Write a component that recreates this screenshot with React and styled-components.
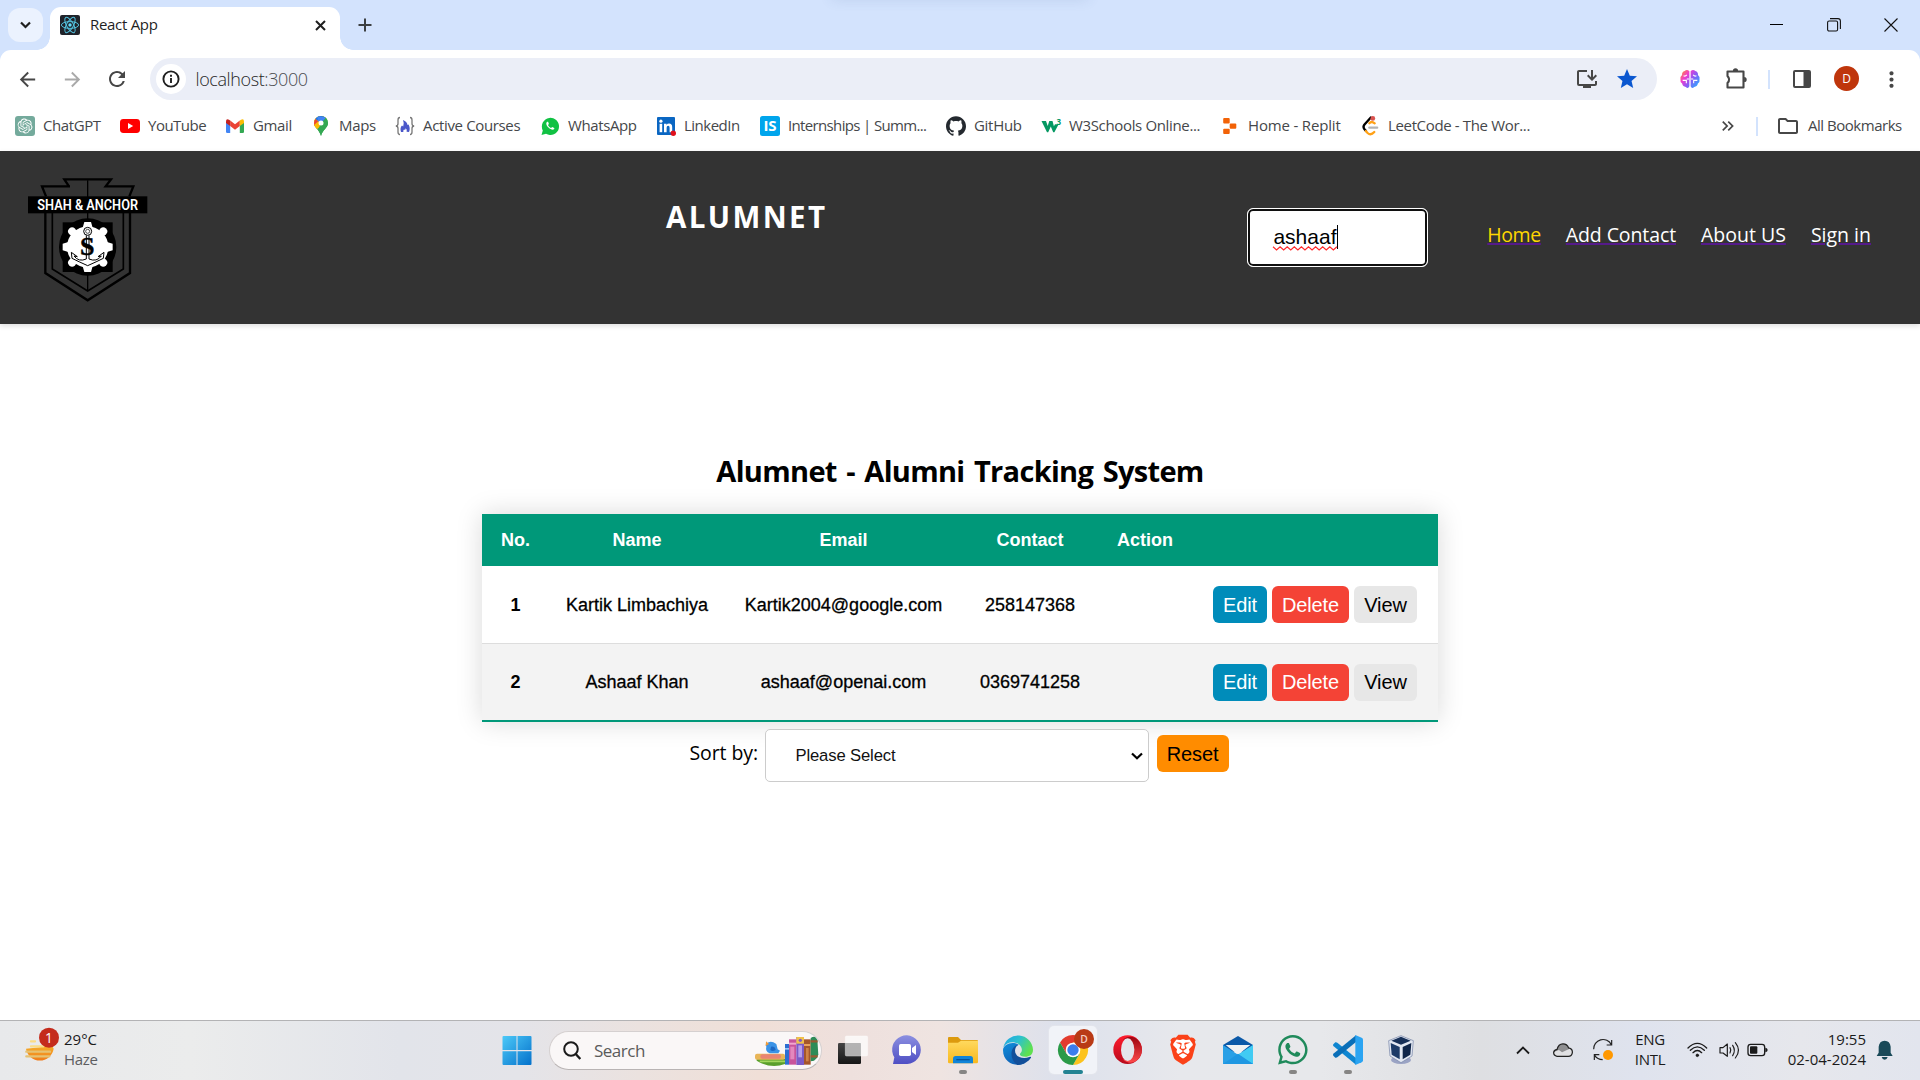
import React from "react";
import styled, { createGlobalStyle } from "styled-components";
import {
  MdArrowBack,
  MdArrowForward,
  MdRefresh,
  MdOutlineInstallDesktop,
  MdStar,
  MdMoreVert,
  MdKeyboardDoubleArrowRight,
  MdOutlineFolder,
} from "react-icons/md";
import { SiOpenai, SiBrave, SiGithub } from "react-icons/si";
import { FaWhatsapp } from "react-icons/fa";

const ui = `"Open Sans", "Noto Sans", sans-serif`;
const arial = `"Liberation Sans", Arial, sans-serif`;

const GlobalStyle = createGlobalStyle`
  *, *::before, *::after { box-sizing: border-box; }
  body { margin: 0; background: #fff; font-family: ${ui}; overflow: hidden; }
  svg { display: block; flex: none; overflow: visible; }
`;

const Screen = styled.div`
  width: 1920px;
  height: 1080px;
  display: flex;
  flex-direction: column;
  overflow: hidden;
`;

/* ---------- browser frame ---------- */

const TabStrip = styled.div`
  position: relative;
  display: flex;
  height: 50px;
  flex: none;
  padding: 7px 1px 0 8px;
  background: #d3e3fd;
  overflow: hidden;
  &::after {
    content: "";
    position: absolute;
    top: -10px;
    left: 832px;
    width: 256px;
    height: 8px;
    box-shadow: 0 0 14px rgba(60, 90, 140, 0.2);
  }
`;

const TabSearch = styled.div`
  width: 35px;
  height: 34px;
  margin: 1px 7px 0 0;
  border-radius: 12px;
  background: #ebf2fe;
  display: flex;
  align-items: center;
  justify-content: center;
`;

const Tab = styled.div`
  position: relative;
  width: 290px;
  height: 43px;
  padding: 0 10px 7px 10px;
  display: flex;
  align-items: center;
  background: #fff;
  border-radius: 11px 11px 0 0;
  &::before,
  &::after {
    content: "";
    position: absolute;
    bottom: 0;
    width: 13px;
    height: 13px;
  }
  &::before {
    left: -13px;
    background: radial-gradient(circle at 0 0, transparent 12.5px, #fff 13px);
  }
  &::after {
    right: -13px;
    background: radial-gradient(circle at 100% 0, transparent 12.5px, #fff 13px);
  }
`;

const TabTitle = styled.span`
  margin: 0 0 2px 10px;
  flex: 1;
  font-size: 15px;
  letter-spacing: -0.3px;
  line-height: 20px;
  color: #1f1f1f;
`;

const NewTab = styled.div`
  width: 30px;
  height: 36px;
  margin-left: 10px;
  display: flex;
  align-items: center;
  justify-content: center;
`;

const WindowButtons = styled.div`
  margin-left: auto;
  display: flex;
  height: 35px;
`;

const WindowButton = styled.div`
  width: 57px;
  display: flex;
  align-items: center;
  justify-content: center;
`;

const ToolbarBack = styled.div`
  background: #d3e3fd;
  flex: none;
`;

const Toolbar = styled.div`
  display: flex;
  align-items: center;
  height: 50px;
  padding: 8px 0 0 4.5px;
  background: #fff;
  border-radius: 11px 11px 0 0;
`;

const Slot = styled.div`
  width: ${(p) => p.$w || 45}px;
  flex: none;
  display: flex;
  align-items: center;
  justify-content: center;
  color: ${(p) => p.$c || "#474747"};
`;

const Omnibox = styled.div`
  width: 1507px;
  height: 42px;
  margin: 0 10px 0 10.5px;
  padding: 0 10px 0 6px;
  border-radius: 21px;
  background: #ebeef7;
  display: flex;
  align-items: center;
`;

const SiteInfo = styled.div`
  width: 30px;
  height: 30px;
  border-radius: 50%;
  background: #fff;
  display: flex;
  align-items: center;
  justify-content: center;
`;

const Address = styled.span`
  flex: 1;
  margin-left: 9.5px;
  font-size: 18px;
  line-height: 24px;
  letter-spacing: -0.4px;
  font-weight: 300;
  color: #1f1f1f;
  span { color: #4a4c50; }
`;

const Divider = styled.div`
  width: 2px;
  height: 19px;
  margin: 0 ${(p) => p.$m}px;
  background: #d3e3fd;
`;

const Avatar = styled.div`
  width: 25px;
  height: 25px;
  margin-bottom: 2px;
  border-radius: 50%;
  background: #bf360c;
  color: #fff;
  font-size: 12px;
  line-height: 25px;
  text-align: center;
`;

const BookmarksBar = styled.div`
  display: flex;
  align-items: center;
  height: 51px;
  flex: none;
  padding: 1px 16px 0 15px;
  background: #fff;
`;

const Bookmark = styled.div`
  width: ${(p) => p.$w}px;
  flex: none;
  display: flex;
  align-items: center;
  gap: 8px;
`;

const BookmarkIcon = styled.div`
  width: 20px;
  height: 20px;
  flex: none;
`;

const BookmarkName = styled.span`
  margin-bottom: 2px;
  white-space: nowrap;
  font-size: 15px;
  line-height: 20px;
  letter-spacing: ${(p) => p.$ls}px;
  color: #45474a;
`;

const BookmarksEnd = styled.div`
  margin-left: auto;
  display: flex;
  align-items: center;
  color: #474747;
`;

/* ---------- page ---------- */

const Header = styled.header`
  position: relative;
  display: flex;
  align-items: flex-start;
  height: 173px;
  flex: none;
  padding: 0 49px 0 28px;
  background: #333;
  box-shadow: 0 2px 5px rgba(0, 0, 0, 0.13);
`;

const Crest = styled.div`
  width: 120px;
  margin-top: 26px;
`;

const Brand = styled.h1`
  margin: 46px 0 0 518px;
  width: 582px;
  font-size: 29.5px;
  line-height: 40px;
  font-weight: 700;
  letter-spacing: 2.4px;
  color: #fff;
`;

const SearchField = styled.div`
  position: relative;
  width: 181px;
  height: 59px;
  margin-top: 57px;
  padding: 0 0 2px 25px;
  display: flex;
  align-items: center;
  border: 1px solid #fff;
  border-radius: 6px;
  background: #fff;
  box-shadow: inset 0 0 0 2px #101010;
  font: 21px/24px ${arial};
  color: #000;
`;

const Caret = styled.span`
  width: 1px;
  height: 24px;
  background: #000;
`;

const Squiggle = styled.svg`
  position: absolute;
  left: 25px;
  top: 37px;
`;

const Nav = styled.nav`
  margin: 69px 0 0 59px;
  display: flex;
  gap: 25px;
`;

const NavLink = styled.a`
  font-size: 19.5px;
  line-height: 30px;
  white-space: nowrap;
  letter-spacing: ${(p) => p.$ls || 0}px;
  color: ${(p) => (p.$active ? "#ffd700" : "#fff")};
  text-decoration: underline #551a8b 2px;
  text-underline-offset: 1px;
`;

const Main = styled.main`
  flex: 1;
  display: flex;
  flex-direction: column;
  align-items: center;
  padding-top: 127px;
`;

const Title = styled.h2`
  margin: 0 0 23px;
  font-size: 29px;
  line-height: 40px;
  font-weight: 700;
  letter-spacing: -0.68px;
  word-spacing: 2.6px;
  color: #000;
`;

const Table = styled.table`
  width: 956px;
  table-layout: fixed;
  border-collapse: separate;
  border-spacing: 0;
  font: 18px/22px ${arial};
  text-align: center;
  background: #fff;
  box-shadow: 0 0 25px rgba(0, 0, 0, 0.15);
`;

const HeadCell = styled.th`
  height: 52px;
  padding: 0;
  background: #009879;
  color: #fff;
  font-weight: 700;
`;

const Cell = styled.td`
  height: 78px;
  padding: 0;
  color: #000;
  font-weight: ${(p) => (p.$strong ? 700 : 400)};
  -webkit-text-stroke: ${(p) => (p.$strong ? 0 : 0.3)}px #000;
  background: ${(p) => (p.$last ? "#f3f3f3" : "#fff")};
  border-bottom: ${(p) => (p.$last ? "2px solid #009879" : "1px solid #ddd")};
`;

const Actions = styled.div`
  display: flex;
  justify-content: flex-end;
  gap: 5px;
  padding-right: 21px;
`;

const kinds = {
  edit: ["#008cba", "#fff"],
  delete: ["#f44336", "#fff"],
  view: ["#e7e7e7", "#000"],
  reset: ["#ff8c00", "#000"],
};

const Button = styled.button`
  width: ${(p) => p.$w}px;
  height: 37px;
  padding: 0;
  border: 0;
  border-radius: 6px;
  font: 20px/24px ${arial};
  letter-spacing: -0.1px;
  -webkit-text-stroke: 0;
  background: ${(p) => kinds[p.$kind][0]};
  color: ${(p) => kinds[p.$kind][1]};
`;

const SortRow = styled.div`
  display: flex;
  align-items: flex-start;
  margin: 7px 2px 0 0;
`;

const SortLabel = styled.label`
  width: 69px;
  margin: 9px 6px 0 0;
  font-size: 19.5px;
  line-height: 30px;
  letter-spacing: -0.1px;
  white-space: nowrap;
`;

const SelectBox = styled.div`
  width: 384px;
  height: 53px;
  margin-right: 8px;
  padding: 0 5px 0 30px;
  display: flex;
  align-items: center;
  justify-content: space-between;
  border: 1px solid #ccc;
  border-radius: 5px;
  background: #fff;
  font: 16.67px/20px ${arial};
  letter-spacing: -0.15px;
  color: #111;
`;

const ResetWrap = styled.div`
  margin-top: 6px;
`;

/* ---------- taskbar ---------- */

const Taskbar = styled.footer`
  display: flex;
  align-items: flex-start;
  height: 60px;
  flex: none;
  padding: 5px 17px 0 25px;
  border-top: 1px solid #b3b3b5;
  background: linear-gradient(
    90deg,
    #e8e9eb 0,
    #ebecec 190px,
    #e2e4ea 400px,
    #e4e4e9 520px,
    #ebe2df 640px,
    #f0dfd7 760px,
    #eee0dd 850px,
    #efe4e1 940px,
    #dde1ec 1060px,
    #e7e8ec 1180px,
    #e7e8eb 1320px,
    #dedfe2 1480px,
    #dfe3ee 1640px,
    #e6e7ec 1800px,
    #e2e5ee 1920px
  );
`;

const Weather = styled.div`
  display: flex;
  width: 467.5px;
  gap: 4px;
`;

const Lines = styled.div`
  width: ${(p) => p.$w || "auto"};
  margin-top: 3px;
  display: flex;
  flex-direction: column;
  text-align: ${(p) => p.$align || "left"};
  font-size: 15px;
  line-height: 20px;
  letter-spacing: ${(p) => p.$ls || 0}px;
  white-space: nowrap;
  color: #1b1b1b;
`;

const Muted = styled.span`
  color: #5c5d5f;
  letter-spacing: -0.3px;
`;

const SearchPill = styled.div`
  width: 273px;
  height: 39px;
  margin: 5px 7px 0 8.5px;
  padding: 0 2px 0 13px;
  display: flex;
  align-items: center;
  border: 1px solid #d5d0d0;
  border-bottom-color: #b9b4b4;
  border-radius: 20px;
  background: #faf7f7;
  overflow: hidden;
`;

const SearchText = styled.span`
  flex: 1;
  margin-left: 13px;
  font-size: 17px;
  line-height: 24px;
  letter-spacing: -0.5px;
  color: #5b5b5b;
`;

const Apps = styled.div`
  display: flex;
  gap: 7px;
`;

const App48 = styled.div`
  width: 48px;
  height: 48px;
  display: flex;
  flex-direction: column;
  align-items: center;
  border-radius: 5px;
  background: ${(p) => (p.$active ? "#f1f3f8" : "transparent")};
  box-shadow: ${(p) => (p.$active ? "0 0 0 1px #e3e5ec" : "none")};
`;

const Indicator = styled.div`
  width: ${(p) => (p.$active ? 20 : 8)}px;
  height: 4px;
  border-radius: 2px;
  background: ${(p) => (p.$active ? "#238393" : "#868584")};
`;

const Tray = styled.div`
  margin-left: auto;
  display: flex;
`;

const TrayIcon = styled.div`
  width: ${(p) => p.$w}px;
  height: 48px;
  display: flex;
  align-items: center;
  justify-content: center;
`;

/* ---------- drawings ---------- */

const ReactIcon = () => (
  <svg width="20" height="20" viewBox="0 0 20 20">
    <rect width="20" height="20" rx="2" fill="#20232a" />
    <g fill="none" stroke="#53c1de" strokeWidth="1">
      {[0, 60, 120].map((a) => (
        <ellipse key={a} cx="10" cy="10" rx="8.6" ry="3.4" transform={`rotate(${a} 10 10)`} />
      ))}
    </g>
    <circle cx="10" cy="10" r="1.7" fill="#61dafb" />
  </svg>
);

const Stroke = ({ d, w = 20, h = 20, s = 2, c = "#1f1f1f" }) => (
  <svg width={w} height={h} viewBox={`0 0 ${w} ${h}`} fill="none" stroke={c} strokeWidth={s}>
    <path d={d} />
  </svg>
);

const CrestLogo = () => (
  <svg width="120" height="128" viewBox="84 80 360 384">
    <g fill="none" stroke="#000" strokeWidth="7">
      <path d="M210 108H126L138 138M207 108L193 87H333L317 108H400L388 138" />
      <path d="M136 186V368L263 450L390 368V186" />
      <path d="M157 186V356L263 422L370 356V186" strokeWidth="5" />
      <path d="M263 90V422" strokeWidth="4" />
    </g>
    <rect x="84" y="138" width="358" height="51" fill="#000" />
    <text x="263" y="179" textAnchor="middle" fill="#fff" fontFamily="Roboto, sans-serif" fontWeight="600" fontSize="43" textLength="302" lengthAdjust="spacingAndGlyphs">
      SHAH &amp; ANCHOR
    </text>
    <circle cx="263" cy="290" r="86" fill="#000" />
    <rect x="188" y="216" width="150" height="149" fill="#000" />
    <g fill="#fff">
      <circle cx="263" cy="290" r="62" />
      {[0, 90, 180, 270].map((a) => (
        <path key={a} d="M248 232L253 215H273L278 232Z" transform={`rotate(${a} 263 290)`} />
      ))}
      {[45, 135, 225, 315].map((a) => (
        <circle key={a} cx="263" cy="224" r="12" transform={`rotate(${a} 263 290)`} />
      ))}
    </g>
    <g fill="none" stroke="#000" strokeWidth="3">
      <circle cx="263" cy="243" r="12" />
      <circle cx="263" cy="243" r="6" strokeWidth="2" />
      <path d="M259 255V326M267 255V326M259 326Q236 336 222 317L232 319L214 306L216 324Q236 334 263 346Q290 334 310 324L312 306L294 319L304 317Q290 336 267 326" />
    </g>
    <text x="262" y="315" textAnchor="middle" fontFamily='"Liberation Serif", serif' fontWeight="700" fontSize="78" stroke="#000" strokeWidth="1.5" fill="#000">
      S
    </text>
  </svg>
);

const ico = { width: 20, height: 20, viewBox: "0 0 20 20" };

const ChatGptIcon = () => (
  <svg {...ico}>
    <rect width="20" height="20" rx="3" fill="#74aa9c" />
    <SiOpenai x="2.5" y="2.5" size={15} color="#fff" />
  </svg>
);
const YouTubeIcon = () => (
  <svg {...ico}>
    <rect y="3" width="20" height="14" rx="3.4" fill="#f00" />
    <path d="M8 7L13.2 10L8 13Z" fill="#fff" />
  </svg>
);
const GmailIcon = () => (
  <svg {...ico}>
    <path d="M1 6V15.7Q1 17 2.3 17H5.2V9Z" fill="#4285f4" />
    <path d="M14.8 9V17H17.7Q19 17 19 15.7V6Z" fill="#34a853" />
    <path d="M5.2 4.6L10 8.3L14.8 4.6V10L10 13.7L5.2 10Z" fill="#ea4335" />
    <path d="M14.8 4.6L16 3.7Q19 2.4 19 5.5V7L14.8 10Z" fill="#fbbc04" />
    <path d="M5.2 4.6L4 3.7Q1 2.4 1 5.5V7L5.2 10Z" fill="#c5221f" />
  </svg>
);
const MapsIcon = () => (
  <svg {...ico}>
    <clipPath id="pin">
      <path d="M10 0A7 7 0 0 1 17 7C17 12 11.6 13.5 10 20C8.4 13.5 3 12 3 7A7 7 0 0 1 10 0Z" />
    </clipPath>
    <g clipPath="url(#pin)">
      <rect width="20" height="20" fill="#34a853" />
      <path d="M0 14L10 7L3 0H0Z" fill="#fbbc04" />
      <path d="M4.5 13L14 2L20 7V0H0V14Z" fill="#fbbc04" />
      <path d="M0 0L10 7L17 -1Z" fill="#1a73e8" />
      <path d="M3 2L10 7.5L6 12L0 6Z" fill="#ea4335" />
      <path d="M3 9L7.5 5L10 10L5 14Z" fill="#fbbc04" />
      <path d="M10 7L15 1L20 4V20H9L7 14Z" fill="#34a853" />
      <path d="M6 0L15 1.5L10 7.2L7 5Z" fill="#4285f4" />
    </g>
    <circle cx="10" cy="7" r="2.5" fill="#fff" />
  </svg>
);
const CoursesIcon = () => (
  <svg {...ico} fill="none">
    <path d="M5 1.5Q3 1.5 3 4V7.5Q3 10 .8 10Q3 10 3 12.5V16Q3 18.5 5 18.5M15 1.5Q17 1.5 17 4V7.5Q17 10 19.2 10Q17 10 17 12.5V16Q17 18.5 15 18.5" stroke="#777" strokeWidth="1.3" />
    <path d="M6 16Q4.6 12 7 9.5L8.2 10.5Q9.5 7.5 8 4Q12 5.5 12.6 9L13.6 8.6Q15.6 12.5 14 16L11.6 15.8Q12.4 13.6 10.6 12.2Q10.6 14.6 9 13.4Q7.8 14.6 8.4 16Z" fill="#4a57c9" />
  </svg>
);
const WhatsAppBookmark = () => (
  <svg {...ico}>
    <path d="M1.5 19L2.8 14.4A8.6 8.6 0 1 1 6 17.8Z" fill="#10c143" />
    <path d="M7.3 5.7C5.5 6.6 6.3 9.4 8.5 11.6C10.7 13.7 13.3 14.5 14.3 12.8L14.3 11.9L12.1 10.9L11.1 12C9.6 11.4 8.6 10.4 8 9L8.9 7.9L8.1 5.8Z" fill="#fff" />
  </svg>
);
const LinkedInIcon = () => (
  <svg {...ico}>
    <rect x="1" y="1" width="18" height="18" rx="1" fill="#0a66c2" />
    <rect x="3.6" y="7.8" width="2.6" height="8.4" fill="#fff" />
    <circle cx="4.9" cy="5.2" r="1.6" fill="#fff" />
    <path d="M8 7.8H10.5V9Q11.3 7.6 13.1 7.6Q16.2 7.6 16.2 11.2V16.2H13.6V11.8Q13.6 9.8 12.2 9.8Q10.6 9.8 10.6 11.8V16.2H8Z" fill="#fff" />
    <circle cx="17.3" cy="17.3" r="2.7" fill="#e0101c" />
  </svg>
);
const InternIcon = () => (
  <svg {...ico}>
    <rect width="20" height="20" rx="2.5" fill="#00a5ec" />
    <text x="10" y="15.4" textAnchor="middle" fontFamily={ui} fontWeight="700" fontSize="15" fill="#fff">
      IS
    </text>
  </svg>
);
const W3Icon = () => (
  <svg {...ico}>
    <path d="M.5 5H5L6.7 10L8.3 5H11.5L12.9 10.2L14 8.2L17.5 8.5L13.4 16.3H12.2L9.8 10.5L7.2 16.3H6Z" fill="#059862" />
    <text x="15.4" y="8.6" fontFamily={ui} fontWeight="700" fontSize="8" fill="#059862">
      3
    </text>
  </svg>
);
const ReplitIcon = () => (
  <svg {...ico} fill="#f26207">
    <rect x="3.2" y="2" width="6.5" height="5.4" rx="1" />
    <rect x="9.7" y="7.4" width="6.6" height="5.4" rx="1" />
    <rect x="3.2" y="12.8" width="6.5" height="5.2" rx="1" />
  </svg>
);
const LeetIcon = () => (
  <svg {...ico} fill="none" strokeWidth="2.3" strokeLinecap="round">
    <path d="M10.8 1.5L4.3 8.8Q2.7 11 4.3 13L6 15" stroke="#000" />
    <path d="M9.3 7.2Q11.5 4.6 14.7 7.3M5.8 15L7.6 17Q10.8 19.8 14.3 16" stroke="#ffa116" />
    <path d="M9.3 11.7H17.2" stroke="#b3b3b3" />
    <circle cx="12.8" cy="2.4" r="2.4" fill="#d9534f" />
  </svg>
);

const bookmarks = [
  ["ChatGPT", 105, -0.4, <ChatGptIcon />],
  ["YouTube", 105, -0.5, <YouTubeIcon />],
  ["Gmail", 86, -0.35, <GmailIcon />],
  ["Maps", 84, -0.35, <MapsIcon />],
  ["Active Courses", 145, -0.35, <CoursesIcon />],
  ["WhatsApp", 116, -0.4, <WhatsAppBookmark />],
  ["LinkedIn", 104, -0.5, <LinkedInIcon />],
  ["Internships | Summ...", 186, -0.65, <InternIcon />],
  ["GitHub", 95, -0.3, <SiGithub size={20} color="#24292f" />],
  ["W3Schools Online...", 179, -0.35, <W3Icon />],
  ["Home - Replit", 140, -0.17, <ReplitIcon />],
  ["LeetCode - The Wor...", 190, -0.35, <LeetIcon />],
];

const WeatherIcon = () => (
  <svg width="35" height="40" viewBox="75 48 105 120">
    <defs>
      <linearGradient id="sun" x1="0" y1="0" x2="0" y2="1">
        <stop offset="0" stopColor="#f6b32b" />
        <stop offset="1" stopColor="#f07c1b" />
      </linearGradient>
    </defs>
    <path d="M78 116A42 42 0 0 0 161 116L155 104L120 112Z" fill="url(#sun)" />
    <g stroke="#fbdc84" strokeWidth="7" strokeLinecap="round">
      <path d="M93 94H105M93 109H130" />
      <path d="M79 125H150M79 139H148" stroke="#e6c273" />
    </g>
    <circle cx="147" cy="83" r="30" fill="#c42b1c" />
    <text x="147" y="98" textAnchor="middle" fontFamily={ui} fontSize="41" fill="#fff">
      1
    </text>
  </svg>
);

const WindowsIcon = () => (
  <svg width="48" height="44" viewBox="7.5 48 144 132">
    <defs>
      <linearGradient id="win" x1="0" y1="0" x2="1" y2="1">
        <stop offset="0" stopColor="#4cc9f8" />
        <stop offset="1" stopColor="#0471cb" />
      </linearGradient>
    </defs>
    <path d="M36 81Q36 78 39 78H78V120H36ZM81 78H120Q123 78 123 81V120H81ZM36 124H78V165H39Q36 165 36 162ZM81 124H123V162Q123 165 120 165H81Z" fill="url(#win)" />
  </svg>
);

const Books = () => (
  <svg width="64" height="30" viewBox="798 84 192 90">
    <path d="M803 158Q845 184 888 168V152H803Z" fill="#5a9e2c" />
    <path d="M812 160H888" stroke="#a3d65c" strokeWidth="5" />
    <rect x="798" y="137" width="90" height="18" rx="6" fill="#e9b558" />
    <rect x="814" y="139" width="62" height="13" rx="6" fill="#e88573" />
    <path d="M830 110Q842 94 862 108L866 124L873 128L868 136H842Q828 130 832 116Z" fill="#3b93e6" />
    <path d="M831 100L840 108L830 114Z" fill="#f19b38" />
    <path d="M846 116Q858 114 860 126Q850 132 844 126Z" fill="#1d68c4" />
    <rect x="888" y="108" width="12" height="62" fill="#2c6fd1" />
    <rect x="888" y="120" width="12" height="5" fill="#9cc7f5" />
    <rect x="900" y="94" width="22" height="76" fill="#c8549b" />
    <rect x="900" y="104" width="22" height="6" fill="#f1a6cf" />
    <rect x="904" y="116" width="12" height="38" fill="#e388bd" />
    <rect x="922" y="87" width="23" height="84" fill="#7c5bc7" />
    <rect x="922" y="87" width="23" height="20" fill="#f0c04a" />
    <circle cx="934" cy="97" r="5" fill="#7c5bc7" />
    <rect x="928" y="112" width="11" height="36" fill="#b7a0ea" />
    <rect x="945" y="94" width="20" height="76" fill="#a5562b" />
    <rect x="945" y="108" width="20" height="6" fill="#e9a25e" />
    <rect x="951" y="120" width="8" height="40" fill="#cf8247" />
    <path d="M965 90Q980 80 985 96L988 140Q985 152 975 158L965 160Z" fill="#2e8b57" />
    <path d="M965 100H986M965 145H986" stroke="#9a5a32" strokeWidth="7" />
  </svg>
);

const AppSvg = ({ x, children }) => (
  <svg width="48" height="44" viewBox={`${x} 48 144 132`}>
    {children}
  </svg>
);

const TaskView = () => (
  <AppSvg x={1017}>
    <defs>
      <linearGradient id="tv" x1="0" y1="0" x2="0" y2="1">
        <stop offset="0" stopColor="#444" />
        <stop offset="1" stopColor="#161616" />
      </linearGradient>
    </defs>
    <rect x="1044" y="99" width="69" height="63" rx="4" fill="url(#tv)" />
    <rect x="1066" y="78" width="67" height="60" rx="4" fill="#fff" fillOpacity=".72" stroke="#fff" strokeOpacity=".6" strokeWidth="2" />
    <rect x="1066" y="99" width="46" height="39" fill="#a3a1a0" fillOpacity=".55" />
  </AppSvg>
);
const Chat = () => (
  <AppSvg x={1182}>
    <defs>
      <linearGradient id="chat" x1="0" y1="0" x2="0" y2="1">
        <stop offset="0" stopColor="#8b8fe0" />
        <stop offset="1" stopColor="#4f4fc4" />
      </linearGradient>
    </defs>
    <path d="M1209 162L1213 142A43 43 0 1 1 1252 162Z" fill="url(#chat)" />
    <rect x="1227" y="102" width="36" height="36" rx="5" fill="#fff" />
    <path d="M1266 114L1278 105V135L1266 126Z" fill="#fff" />
  </AppSvg>
);
const Explorer = () => (
  <AppSvg x={1347}>
    <defs>
      <linearGradient id="fold" x1="0" y1="0" x2="0" y2="1">
        <stop offset="0" stopColor="#ffd95e" />
        <stop offset="1" stopColor="#f8b81e" />
      </linearGradient>
    </defs>
    <path d="M1374 84Q1374 81 1377 81H1404L1413 90H1461Q1464 90 1464 94V110H1374Z" fill="#dc9a0e" />
    <path d="M1374 98H1404L1413 92H1464V156Q1464 160 1460 160H1378Q1374 160 1374 156Z" fill="url(#fold)" />
    <path d="M1389 160V146Q1389 138 1397 138H1441Q1449 138 1449 146V160Z" fill="#1184d8" />
    <path d="M1399 149H1439" stroke="#06549c" strokeWidth="4" />
  </AppSvg>
);
const Edge = () => (
  <AppSvg x={102}>
    <defs>
      <linearGradient id="edge1" x1="0" y1="0" x2="1" y2=".5">
        <stop offset="0" stopColor="#1fa3e4" />
        <stop offset=".5" stopColor="#2cc1cf" />
        <stop offset="1" stopColor="#5fe04f" />
      </linearGradient>
      <linearGradient id="edge2" x1="0" y1="0" x2=".5" y2="1">
        <stop offset="0" stopColor="#0f8fdc" />
        <stop offset="1" stopColor="#0f5fb4" />
      </linearGradient>
    </defs>
    <path d="M130 112A45 45 0 0 1 219 119C219 134 208 140 196 140C184 140 178 136 180 131C186 126 188 117 182 109C170 92 142 92 130 112Z" fill="url(#edge1)" />
    <path d="M129 120C130 102 158 92 176 104C162 108 154 124 158 140C164 154 182 160 196 158C178 172 129 165 129 120Z" fill="url(#edge2)" />
    <path d="M176 104C150 108 146 146 172 165C190 164 206 154 213 143C214 139 210 140 208 141C186 150 160 138 166 116C168 110 171 107 176 104Z" fill="#124f9a" />
  </AppSvg>
);
const Chrome = () => (
  <AppSvg x={267}>
    <g transform="translate(339 120)">
      <path d="M-39-22.5A45 45 0 0 1 39-22.5L0-22.5L-19.5 11.25Z" fill="#e33b2e" />
      <path d="M39-22.5A45 45 0 0 1 0 45L19.5 11.25L0-22.5Z" fill="#fcc31e" />
      <path d="M0 45A45 45 0 0 1-39-22.5L-19.5 11.25L19.5 11.25Z" fill="#2a9a48" />
      <circle r="22" fill="#fff" />
      <circle r="17" fill="#3b7ded" />
    </g>
    <circle cx="372" cy="87" r="30" fill="#b93a16" />
    <text x="372" y="98" textAnchor="middle" fontFamily={ui} fontWeight="600" fontSize="31" fill="#f5cfc2">
      D
    </text>
  </AppSvg>
);
const Opera = () => (
  <AppSvg x={432}>
    <defs>
      <linearGradient id="op" x1="0" y1="0" x2="0" y2="1">
        <stop offset="0" stopColor="#ff1b2d" />
        <stop offset="1" stopColor="#b70a1c" />
      </linearGradient>
      <linearGradient id="op2" x1="0" y1="0" x2="0" y2="1">
        <stop offset="0" stopColor="#9c0411" />
        <stop offset="1" stopColor="#ff4b4b" />
      </linearGradient>
    </defs>
    <circle cx="503" cy="119" r="43" fill="url(#op)" />
    <path d="M488 90C505 74 524 82 531 87A43 43 0 0 1 531 151C520 160 502 162 488 148C532 158 534 78 488 90Z" fill="url(#op2)" />
    <ellipse cx="503" cy="119" rx="20" ry="34" fill="#e4e5ec" />
  </AppSvg>
);
const Brave = () => (
  <AppSvg x={597}>
    <path d="M642 88H696L700 104L686 146L669 156L652 146L638 104Z" fill="#fff" />
    <SiBrave x={624} y={74} size={90} color="#fb4219" />
  </AppSvg>
);
const Mail = () => (
  <AppSvg x={762}>
    <path d="M789 105L834 78L879 105V125H789Z" fill="#0b59a8" />
    <path d="M797 105H871L834 134Z" fill="#f1f2f3" />
    <path d="M789 105L834 134L879 105V162H789Z" fill="#2aa0e6" />
    <path d="M834 134L879 105V162Z" fill="#41cbf3" />
    <path d="M834 131L879 162H789Z" fill="#1f97e2" />
  </AppSvg>
);
const WhatsApp = () => (
  <AppSvg x={927}>
    <FaWhatsapp x={948} y={69} size={101} color="#1f8a5b" />
  </AppSvg>
);
const VsCode = () => (
  <AppSvg x={1092}>
    <path d="M1120 103L1126 97Q1129 96 1132 98L1188 144V164L1120 108Q1118 105 1120 103Z" fill="#0f86d1" />
    <path d="M1120 137L1126 143Q1129 144 1132 142L1188 96V76L1120 131Q1118 134 1120 137Z" fill="#0a6fb8" />
    <path d="M1186 75L1205 83Q1209 85 1209 89V151Q1209 155 1205 157L1186 165Z" fill="#2ba4f2" />
  </AppSvg>
);
const VBox = () => (
  <AppSvg x={1257}>
    <ellipse cx="1323" cy="150" rx="30" ry="12" fill="#9aa3c4" />
    <path d="M1323 77L1360 92L1356 138L1323 158L1290 138L1286 92Z" fill="#e3e8f2" stroke="#6f7fa3" strokeWidth="2" />
    <path d="M1323 80L1352 92L1323 104L1294 92Z" fill="#173058" />
    <path d="M1292 99L1319 111V148L1295 134Z" fill="#1d3b68" />
    <path d="M1354 99L1328 111V148L1351 134Z" fill="#10264a" />
  </AppSvg>
);

const apps = [
  [<TaskView />],
  [<Chat />],
  [<Explorer />, "open"],
  [<Edge />],
  [<Chrome />, "active"],
  [<Opera />],
  [<Brave />],
  [<Mail />],
  [<WhatsApp />, "open"],
  [<VsCode />, "open"],
  [<VBox />],
];

const Cloud = () => (
  <svg width="20" height="14.5" viewBox="1 2 64 45">
    <path d="M14 22Q18 4 33 4Q46 4 51 17Q64 20 63 32Q61 44 50 44H14Q3 42 3 32Q4 24 14 22Z" fill="#e0e0e2" />
    <path d="M4 30Q6 22 14 22Q18 4 33 4Q46 4 51 17L56 19L30 31L20 24Z" fill="#8f8f91" />
    <path d="M14 22Q18 4 33 4Q46 4 51 17Q64 20 63 32Q61 44 50 44H14Q3 42 3 32Q4 24 14 22Z" fill="none" stroke="#222" strokeWidth="4" />
  </svg>
);
const Sync = () => (
  <svg width="22" height="22" viewBox="456 87 66 66">
    <g fill="none" stroke="#222" strokeWidth="3.5">
      <path d="M461 118A28 28 0 0 1 514 104M515 90V105H500" />
      <path d="M463 150V134H478M464 136Q472 148 488 149" />
    </g>
    <circle cx="504" cy="135" r="15" fill="#ff9800" />
  </svg>
);
const Wifi = () => (
  <svg width="21" height="16" viewBox="743 94 63 48" fill="none" stroke="#1b1b1b" strokeWidth="4" strokeLinecap="round">
    <path d="M746 112Q774 84 802 112M753 119Q774 98 795 119M761 126Q774 113 787 126" />
    <circle cx="774" cy="134" r="4" fill="#1b1b1b" strokeWidth="2" />
  </svg>
);
const Volume = () => (
  <svg width="21" height="19" viewBox="833 92 63 57" fill="none" stroke="#1b1b1b" strokeWidth="3.5" strokeLinecap="round" strokeLinejoin="round">
    <path d="M836 112H845L858 101V138L845 128H836Z" />
    <path d="M866 112Q871 120 866 128M874 105Q884 120 874 136M882 97Q901 120 882 143" />
  </svg>
);
const Battery = () => (
  <svg width="21" height="14" viewBox="923 99 63 42">
    <rect x="926" y="103" width="50" height="34" rx="8" fill="none" stroke="#1b1b1b" strokeWidth="4" />
    <rect x="932" y="109" width="22" height="22" rx="3" fill="#1b1b1b" />
    <path d="M978 113Q985 114 985 120Q985 126 978 127Z" fill="#1b1b1b" />
  </svg>
);
const Bell = () => (
  <svg width="18" height="20" viewBox="1309 92 54 60" fill="#1a4a59">
    <path d="M1317 130V112Q1319 94 1335 94Q1351 94 1353 112V130L1359 140H1311Z" />
    <path d="M1326 143H1344Q1342 151 1335 151Q1328 151 1326 143Z" />
  </svg>
);

const rows = [
  ["1", "Kartik Limbachiya", "Kartik2004@google.com", "258147368"],
  ["2", "Ashaaf Khan", "ashaaf@openai.com", "0369741258"],
];

const zigzag = "M0 .8" + Array.from({ length: 18 }, (_, i) => `L${(i + 1) * 3.55} ${i % 2 ? 0.8 : 4}`).join("");

export default function App() {
  return (
    <Screen>
      <GlobalStyle />
      <TabStrip>
        <TabSearch>
          <Stroke d="M1 1.5L5.5 6L10 1.5" w={11} h={8} s={2.2} />
        </TabSearch>
        <Tab>
          <ReactIcon />
          <TabTitle>React App</TabTitle>
          <Slot $w={20}>
            <Stroke d="M1 1L10 10M10 1L1 10" w={11} h={11} s={2} />
          </Slot>
        </Tab>
        <NewTab>
          <Stroke d="M7 .5V13.5M.5 7H13.5" w={14} h={14} s={2} c="#3c4043" />
        </NewTab>
        <WindowButtons>
          <WindowButton>
            <Stroke d="M0 .5H13" w={13} h={1} s={1} c="#000" />
          </WindowButton>
          <WindowButton>
            <svg width="14" height="14" viewBox="0 0 14 14" fill="none" stroke="#111" strokeWidth="1.1">
              <rect x=".6" y="3" width="10" height="10" rx="1.5" />
              <path d="M3 .6H11Q13.4 .6 13.4 3V11" />
            </svg>
          </WindowButton>
          <WindowButton>
            <Stroke d="M.5 .5L13.5 13.5M13.5 .5L.5 13.5" w={14} h={14} s={1.1} c="#111" />
          </WindowButton>
        </WindowButtons>
      </TabStrip>
      <ToolbarBack>
        <Toolbar>
          <Slot><MdArrowBack size={23} /></Slot>
          <Slot $c="#a9a9a9"><MdArrowForward size={23} /></Slot>
          <Slot><MdRefresh size={24} /></Slot>
          <Omnibox>
            <SiteInfo>
              <svg width="18" height="18" viewBox="0 0 18 18">
                <circle cx="9" cy="9" r="7.6" fill="none" stroke="#1f1f1f" strokeWidth="1.9" />
                <path d="M9 8V13M9 4.8V6.7" stroke="#1f1f1f" strokeWidth="1.9" />
              </svg>
            </SiteInfo>
            <Address>localhost<span>:3000</span></Address>
            <Slot $w={40}><MdOutlineInstallDesktop size={24} /></Slot>
            <Slot $w={40} $c="#0b57d0"><MdStar size={24} /></Slot>
          </Omnibox>
          <Slot $w={46}>
            <svg width="22" height="22" viewBox="0 0 24 24">
              <defs>
                <linearGradient id="brain" gradientUnits="userSpaceOnUse" x1="3" y1="3" x2="22" y2="18">
                  <stop offset="0" stopColor="#ff8a3d" />
                  <stop offset=".3" stopColor="#f03bd0" />
                  <stop offset=".6" stopColor="#8a5bf5" />
                  <stop offset="1" stopColor="#2ea8ff" />
                </linearGradient>
              </defs>
              <path d="M11.3 3.5Q8.6 1 6.2 3.4Q3 4.3 3.3 7.6Q.8 9.6 1.6 12.4Q1 15.6 3.4 17Q4.2 20.4 7.4 20.7Q10 23 11.3 20Z" fill="url(#brain)" />
              <path d="M12.7 3.5Q15.4 1 17.8 3.4Q21 4.3 20.7 7.6Q23.2 9.6 22.4 12.4Q23 15.6 20.6 17Q19.8 20.4 16.6 20.7Q14 23 12.7 20Z" fill="url(#brain)" />
              <path d="M5 8.5Q7 9.5 8.5 7.5M4 13.5H8V16.5M11 12H8.5M19 8.5Q17 9.5 15.5 7.5M20 13.5H16V16.5M13 12H15.5" fill="none" stroke="#fff" strokeWidth="1.2" />
            </svg>
          </Slot>
          <Slot $w={46}>
            <svg width="24" height="24" viewBox="0.5 0.5 24 24">
              <path d="M4 5H20V21H4V16.5Q7.3 13 4 9.5Z" fill="none" stroke="#474747" strokeWidth="2.1" strokeLinejoin="round" />
              <path d="M9.4 4.4A2.6 2.6 0 0 1 14.6 4.4ZM20.6 10.4A2.6 2.6 0 0 1 20.6 15.6Z" fill="#474747" />
            </svg>
          </Slot>
          <Divider $m={9} />
          <Slot>
            <svg width="18" height="18" viewBox="0 0 18 18">
              <rect x="1" y="1" width="16" height="16" rx="1" fill="none" stroke="#474747" strokeWidth="2" />
              <rect x="10.5" y="1" width="6.5" height="16" fill="#474747" />
            </svg>
          </Slot>
          <Slot><Avatar>D</Avatar></Slot>
          <Slot><MdMoreVert size={25} /></Slot>
        </Toolbar>
      </ToolbarBack>
      <BookmarksBar>
        {bookmarks.map(([name, w, ls, icon]) => (
          <Bookmark key={name} $w={w}>
            <BookmarkIcon>{icon}</BookmarkIcon>
            <BookmarkName $ls={ls}>{name}</BookmarkName>
          </Bookmark>
        ))}
        <BookmarksEnd>
          <MdKeyboardDoubleArrowRight size={20} />
          <Divider $m={18} />
          <Bookmark $w={128}>
            <MdOutlineFolder size={24} />
            <BookmarkName $ls={-0.48}>All Bookmarks</BookmarkName>
          </Bookmark>
        </BookmarksEnd>
      </BookmarksBar>

      <Header>
        <Crest><CrestLogo /></Crest>
        <Brand>ALUMNET</Brand>
        <SearchField>
          ashaaf
          <Caret />
          <Squiggle width="64" height="5" viewBox="0 0 64 5">
            <path d={zigzag} fill="none" stroke="#ff2a2a" strokeWidth="1.2" />
          </Squiggle>
        </SearchField>
        <Nav>
          <NavLink $active $ls={-0.4}>Home</NavLink>
          <NavLink $ls={-0.1}>Add Contact</NavLink>
          <NavLink>About US</NavLink>
          <NavLink>Sign in</NavLink>
        </Nav>
      </Header>
      <Main>
        <Title>Alumnet - Alumni Tracking System</Title>
        <Table>
          <colgroup>
            {[67, 176, 237, 136, 94, 246].map((w, i) => (
              <col key={i} style={{ width: w }} />
            ))}
          </colgroup>
          <thead>
            <tr>
              {["No.", "Name", "Email", "Contact", "Action", ""].map((h) => (
                <HeadCell key={h}>{h}</HeadCell>
              ))}
            </tr>
          </thead>
          <tbody>
            {rows.map((r, i) => (
              <tr key={r[0]}>
                {r.map((v, j) => (
                  <Cell key={j} $strong={j === 0} $last={i === 1}>{v}</Cell>
                ))}
                <Cell $last={i === 1} $strong />
                <Cell $last={i === 1}>
                  <Actions>
                    <Button $kind="edit" $w={54}>Edit</Button>
                    <Button $kind="delete" $w={77}>Delete</Button>
                    <Button $kind="view" $w={63}>View</Button>
                  </Actions>
                </Cell>
              </tr>
            ))}
          </tbody>
        </Table>
        <SortRow>
          <SortLabel>Sort by:</SortLabel>
          <SelectBox>
            Please Select
            <Stroke d="M1 1.5L6 6.3L11 1.5" w={12} h={8} s={2.2} c="#000" />
          </SelectBox>
          <ResetWrap>
            <Button $kind="reset" $w={72}>Reset</Button>
          </ResetWrap>
        </SortRow>
      </Main>

      <Taskbar>
        <Weather>
          <WeatherIcon />
          <Lines>
            <span>29°C</span>
            <Muted>Haze</Muted>
          </Lines>
        </Weather>
        <App48><WindowsIcon /></App48>
        <SearchPill>
          <svg width="18" height="19" viewBox="0 0 18 19" fill="none" stroke="#1b1b1b" strokeWidth="2">
            <circle cx="8" cy="8" r="6.8" />
            <path d="M12.5 12.8L17.3 18" strokeWidth="2.4" />
          </svg>
          <SearchText>Search</SearchText>
          <Books />
        </SearchPill>
        <Apps>
          {apps.map(([icon, state], i) => (
            <App48 key={i} $active={state === "active"}>
              {icon}
              {state && <Indicator $active={state === "active"} />}
            </App48>
          ))}
        </Apps>
        <Tray>
          <TrayIcon $w={40}><Stroke d="M1 7.5L7 1.5L13 7.5" w={14} h={9} s={1.8} c="#1b1b1b" /></TrayIcon>
          <TrayIcon $w={40}><Cloud /></TrayIcon>
          <TrayIcon $w={40}><Sync /></TrayIcon>
          <Lines $w="54px" $align="center" $ls={-0.3}>
            <span>ENG</span>
            <span>INTL</span>
          </Lines>
          <TrayIcon $w={40}><Wifi /></TrayIcon>
          <TrayIcon $w={24}><Volume /></TrayIcon>
          <TrayIcon $w={32}><Battery /></TrayIcon>
          <Lines $w="93px" $align="right">
            <span>19:55</span>
            <span>02-04-2024</span>
          </Lines>
          <TrayIcon $w={37}><Bell /></TrayIcon>
        </Tray>
      </Taskbar>
    </Screen>
  );
}
